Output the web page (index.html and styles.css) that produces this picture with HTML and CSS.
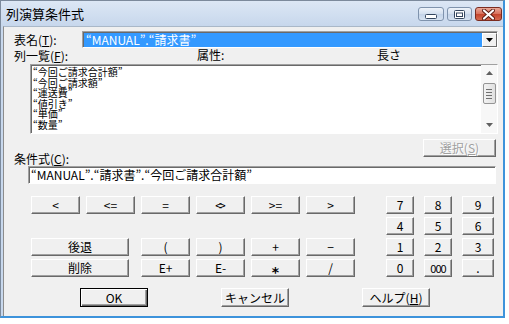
FILE: index.html
```html
<!DOCTYPE html>
<html lang="ja">
<head>
  <meta charset="UTF-8">
  <meta name="viewport" content="width=device-width, initial-scale=1.0">
  <title>列演算条件式</title>
  <link rel="stylesheet" href="styles.css">
</head>
<body>
  <div class="window">
    <div class="titlebar">
      <span class="title">列演算条件式</span>
      <div class="caption-btns">
        <span class="cap cap-min"><svg width="12" height="5" viewBox="0 0 12 5"><rect x="0.5" y="0.5" width="11" height="4" rx="1" fill="#fff" stroke="#34465e"/></svg></span>
        <span class="cap cap-max"><svg width="11" height="9" viewBox="0 0 11 9"><rect x="0.5" y="0.5" width="10" height="8" rx="1" fill="#fff" stroke="#34465e"/><rect x="2.5" y="3" width="6" height="3.5" fill="none" stroke="#34465e"/></svg></span>
        <span class="cap cap-close"><svg width="13" height="11" viewBox="0 0 13 11"><path d="M2 1.5 L11 9.5 M11 1.5 L2 9.5" stroke="#5a1a10" stroke-width="4" stroke-linecap="round"/><path d="M2 1.5 L11 9.5 M11 1.5 L2 9.5" stroke="#fff" stroke-width="2.2" stroke-linecap="round"/></svg></span>
      </div>
    </div>

    <div class="client">
      <div class="row-table">
        <label class="lbl lbl-table">表名(<u>T</u>):</label>
        <div class="combo">
          <span class="combo-text">“MANUAL”.“請求書”</span>
          <span class="combo-btn"><svg width="7" height="4" viewBox="0 0 7 4"><path d="M0 0 H7 L3.5 4 Z" fill="#000"/></svg></span>
        </div>
      </div>

      <div class="row-head">
        <span class="lbl lbl-list">列一覧(<u>F</u>):</span>
        <span class="head-attr">属性:</span>
        <span class="head-len">長さ</span>
      </div>

      <div class="listbox">
        <ul class="items">
          <li>“今回ご請求合計額”</li>
          <li>“今回ご請求額”</li>
          <li>“運送費”</li>
          <li>“値引き”</li>
          <li>“単価”</li>
          <li>“数量”</li>
        </ul>
        <div class="vscroll">
          <span class="sb-arrow"><svg width="7" height="4" viewBox="0 0 7 4"><path d="M0 4 H7 L3.5 0 Z" fill="#606060"/></svg></span>
          <span class="sb-thumb"><i></i><i></i><i></i><i></i></span>
          <span class="sb-fill"></span>
          <span class="sb-arrow"><svg width="7" height="4" viewBox="0 0 7 4"><path d="M0 0 H7 L3.5 4 Z" fill="#606060"/></svg></span>
        </div>
      </div>

      <div class="row-select">
        <button class="btn btn-select" disabled>選択(<u>S</u>)</button>
      </div>

      <div class="lbl lbl-cond">条件式(<u>C</u>):</div>
      <div class="field">“MANUAL”.“請求書”.“今回ご請求合計額”</div>

      <div class="keypad">
        <div class="ops">
          <button class="btn">&lt;</button>
          <button class="btn">&lt;=</button>
          <button class="btn">=</button>
          <button class="btn btn-ne">&lt;&gt;</button>
          <button class="btn">&gt;=</button>
          <button class="btn">&gt;</button>
          <span class="ops-gap"></span>
          <button class="btn btn-wide">後退</button>
          <button class="btn">(</button>
          <button class="btn">)</button>
          <button class="btn">+</button>
          <button class="btn">−</button>
          <button class="btn btn-wide">削除</button>
          <button class="btn">E+</button>
          <button class="btn">E-</button>
          <button class="btn btn-mul">*</button>
          <button class="btn">/</button>
        </div>
        <div class="nums">
          <button class="btn">7</button>
          <button class="btn">8</button>
          <button class="btn">9</button>
          <button class="btn">4</button>
          <button class="btn">5</button>
          <button class="btn">6</button>
          <button class="btn">1</button>
          <button class="btn">2</button>
          <button class="btn">3</button>
          <button class="btn">0</button>
          <button class="btn btn-000">000</button>
          <button class="btn">.</button>
        </div>
      </div>

      <div class="actions">
        <button class="btn btn-action btn-default">OK</button>
        <button class="btn btn-action">キャンセル</button>
        <button class="btn btn-action">ヘルプ(<u>H</u>)</button>
      </div>
    </div>
  </div>
</body>
</html>
```

FILE: styles.css
```css
body { margin: 0; background: #fff; font-family: "Noto Sans CJK JP", "DejaVu Sans", sans-serif; font-size: 12px; color: #000; }
u { text-decoration: underline; text-underline-offset: 1px; }

.window { width: 505px; height: 318px; box-sizing: border-box; display: flex; flex-direction: column; background: #c8d8ed; border: 1px solid #7c8a9c; border-right: 2px solid #3d93db; border-bottom: 2px solid #3d93db; }

/* title bar */
.titlebar { height: 25px; display: flex; align-items: flex-start; padding-left: 5px; background: linear-gradient(#dce7f5, #c7d7ec); }
.title { font-size: 13px; line-height: 16px; margin-top: 5px; }
.caption-btns { margin-left: auto; margin-top: 6px; padding-right: 1px; display: flex; gap: 3px; }
.cap { height: 14px; box-sizing: border-box; display: flex; align-items: center; justify-content: center; border: 1px solid #7f93ad; border-radius: 3px; background: linear-gradient(#eef3fa, #d3dfee 50%, #c3d3e8 51%, #d6e2f1); }
.cap-min { width: 26px; padding-top: 4px; }
.cap-max { width: 25px; }
.cap-close { width: 27px; border-color: #7b2c20; background: linear-gradient(#eaa898, #d8705a 50%, #c4442c 51%, #d66a50); }

/* client area */
.client { flex: 1; margin-left: 2px; border-left: 1px solid #8c8c8c; border-top: 1px solid #aab8c8; background: #f0f0f0; padding: 4px 5px 0 10px; }
.lbl { line-height: 16px; }

.row-table { display: flex; height: 17px; }
.lbl-table { width: 68px; line-height: 17px; }
.combo { flex: 1; display: flex; box-sizing: border-box; height: 17px; padding: 1px 0 0 1px; background: #fff; border: 1px solid; border-color: #a0a0a0 #fff #fff #a0a0a0; box-shadow: inset 1px 1px #696969; }
.combo-text { flex: 1; background: #3399ff; color: #fff; line-height: 14px; padding-left: 2px; }
.combo-btn { width: 15px; box-sizing: border-box; display: flex; align-items: center; justify-content: center; background: #f0f0f0; border: 1px solid; border-color: #fff #696969 #696969 #fff; }

.row-head { display: flex; height: 16px; }
.lbl-list { width: 183px; }
.head-attr { width: 180px; line-height: 14px; }
.head-len { line-height: 14px; }

.listbox { height: 70px; box-sizing: border-box; margin-left: 16px; display: flex; background: #fff; border: 1px solid; border-color: #a0a0a0 #fff #fff #a0a0a0; box-shadow: inset 1px 1px #696969; }
.items { flex: 1; list-style: none; margin: 0; padding: 2px 0 0 2px; font-size: 10px; line-height: 10.5px; }
.vscroll { width: 16px; display: flex; flex-direction: column; align-items: center; background: #f7f7f7; }
.sb-arrow { height: 16px; width: 16px; display: flex; align-items: center; justify-content: center; }
.sb-thumb { width: 13px; height: 21px; box-sizing: border-box; margin-top: 2px; display: flex; flex-direction: column; align-items: center; justify-content: center; gap: 2px; border: 1px solid #959595; border-radius: 2px; background: linear-gradient(90deg, #f2f2f2, #e0e0e0); }
.sb-thumb i { width: 6px; height: 1px; background: #707070; }
.sb-fill { flex: 1; }

.row-select { display: flex; justify-content: flex-end; margin-top: 5px; padding-right: 2px; }
.lbl-cond { margin-top: -4px; line-height: 12px; }

.field { height: 18px; box-sizing: border-box; margin: 1px 2px 0 14px; padding-left: 2px; line-height: 15px; background: #fff; border: 1px solid; border-color: #a0a0a0 #fff #fff #a0a0a0; box-shadow: inset 1px 1px #696969; white-space: nowrap; }

/* buttons */
.btn { font: inherit; font-size: 12px; line-height: 14px; color: #000; padding: 0; margin: 0; box-sizing: border-box; background: #f0f0f0; border: 1px solid; border-color: #fff #696969 #696969 #fff; box-shadow: inset -1px -1px #a0a0a0; cursor: default; }
.btn-select { width: 73px; height: 18px; color: #a0a0a0; text-shadow: 1px 1px #fff; }
.btn-ne { letter-spacing: -3px; padding-right: 3px; }
.btn-mul { font-family: "DejaVu Sans", sans-serif; font-size: 14px; font-weight: bold; padding-top: 5px; }
.btn-000 { letter-spacing: -1px; font-size: 11px; }

.keypad { display: flex; margin: 12px 0 0 17px; }
.ops { display: grid; grid-template-columns: repeat(6, 49px); grid-template-rows: repeat(4, 18px); column-gap: 6px; row-gap: 3px; }
.ops-gap { grid-column: 1 / -1; }
.btn-wide { grid-column: span 2; margin-right: 6px; }
.nums { display: grid; grid-template-columns: 28px 28px 32px; grid-template-rows: repeat(4, 18px); column-gap: 10px; row-gap: 3px; margin-left: 31px; }

.actions { display: flex; gap: 73px; margin: 11px 0 0 66px; }
.btn-action { width: 68px; height: 19px; }
.btn-default { border-color: #000; box-shadow: inset 1px 1px #fff, inset -1px -1px #696969, inset -2px -2px #a0a0a0; }
```
